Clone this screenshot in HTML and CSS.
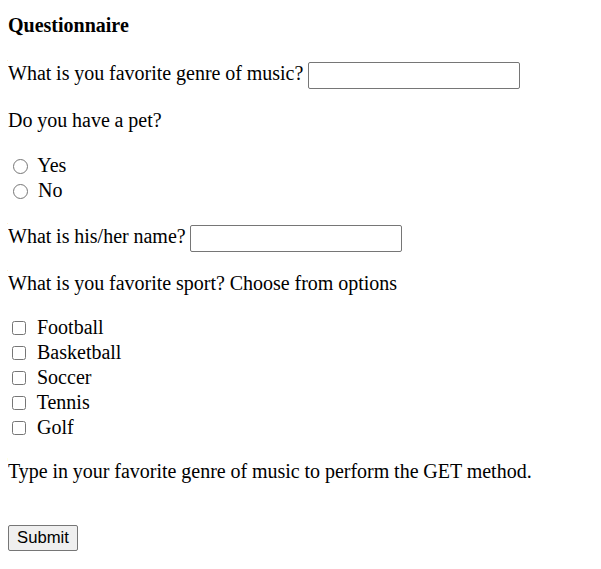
FILE: index.html
```html
<!DOCTYPE html>
<html>
<head>
<meta charset="utf-8">
<title>Questionnaire</title>
<link rel="stylesheet" href="styles.css">
</head>
<body>
<form class="form" action="#" method="get">
  <p class="title">Questionnaire</p>
  <p class="q">What is you favorite genre of music? <input class="text" type="text" name="genre"></p>
  <p class="q">Do you have a pet?</p>
  <div class="options options-pet">
    <label class="opt"><input class="radio" type="radio" name="pet" value="yes"> Yes</label>
    <label class="opt"><input class="radio" type="radio" name="pet" value="no"> No</label>
  </div>
  <p class="q q-name">What is his/her name? <input class="text" type="text" name="petname"></p>
  <p class="q">What is you favorite sport? Choose from options</p>
  <div class="options">
    <label class="opt"><input class="check" type="checkbox" name="sport" value="football"> Football</label>
    <label class="opt"><input class="check" type="checkbox" name="sport" value="basketball"> Basketball</label>
    <label class="opt"><input class="check" type="checkbox" name="sport" value="soccer"> Soccer</label>
    <label class="opt"><input class="check" type="checkbox" name="sport" value="tennis"> Tennis</label>
    <label class="opt"><input class="check" type="checkbox" name="sport" value="golf"> Golf</label>
  </div>
  <p class="q">Type in your favorite genre of music to perform the GET method.</p>
  <div class="actions"><button class="submit" type="submit">Submit</button></div>
</form>
</body>
</html>
```
FILE: styles.css
```css
body {
  margin: 8px;
  font-family: "Liberation Serif", "Times New Roman", serif;
  font-size: 20px;
  color: #000;
  background: #fff;
}
.form {
  margin: 0;
}
.title {
  font-weight: bold;
  margin: 6px 0 25px;
}
.q {
  margin: 20px 0;
  word-spacing: -0.2px;
}
.q-name {
  margin: 22px 0 18px;
}
.options {
  margin: 0;
}
.options-pet {
  padding-top: 1px;
}
.opt {
  display: block;
  height: 25px;
  line-height: 25px;
}
.radio {
  width: 15px;
  height: 15px;
  margin: 0 5px 0 5px;
  vertical-align: -2px;
}
.check {
  width: 14px;
  height: 14px;
  margin: 0 6px 0 4px;
  vertical-align: -1px;
}
.text {
  box-sizing: border-box;
  width: 212px;
  height: 27px;
  border: 1px solid #767676;
  border-radius: 2px;
  padding: 1px 2px;
  font: 16px Arial, "Liberation Sans", sans-serif;
  vertical-align: middle;
}
.actions {
  margin-top: 42px;
}
.submit {
  box-sizing: border-box;
  width: 70px;
  height: 26px;
  padding: 1px 6px;
  background: #efefef;
  border: 1px solid #767676;
  border-radius: 2px;
  font: 16.67px "Liberation Sans", Arial, sans-serif;
  color: #000;
}
```
